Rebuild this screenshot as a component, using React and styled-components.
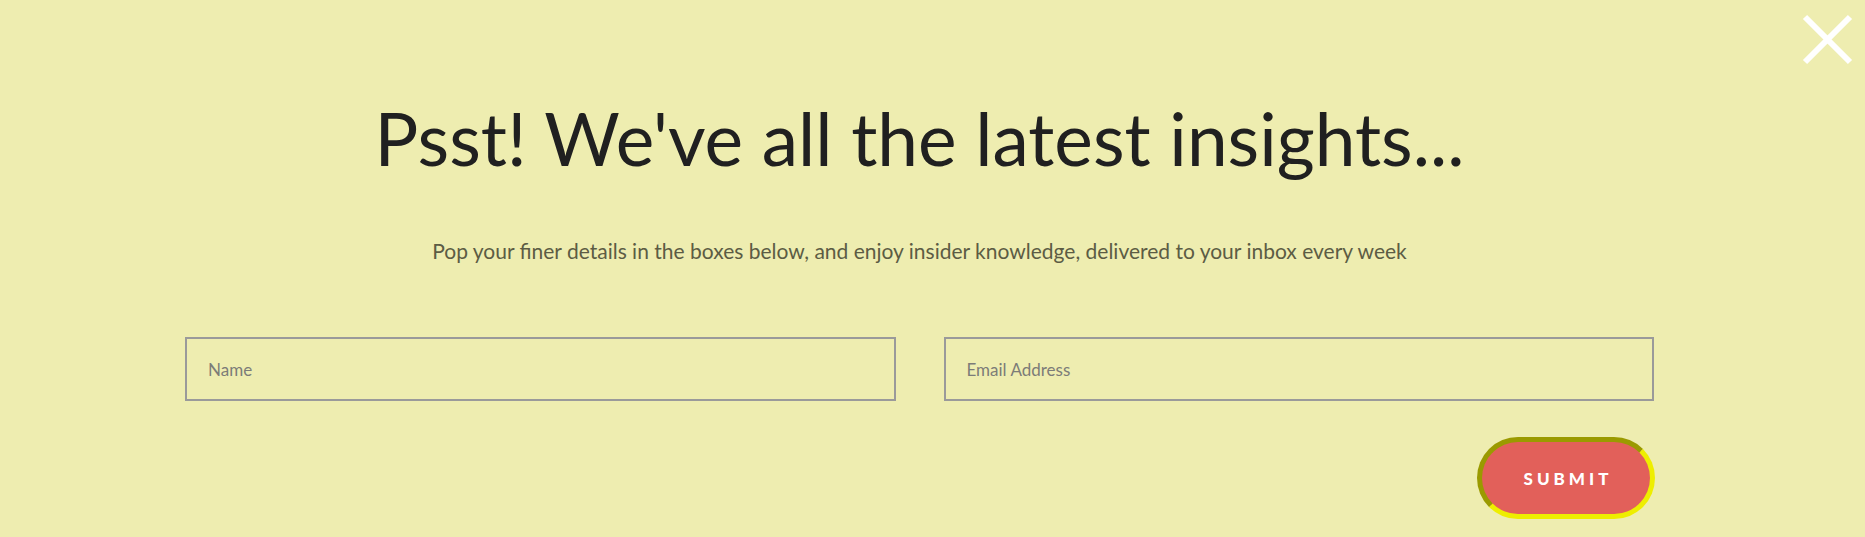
import React from 'react'
import styled, { createGlobalStyle } from 'styled-components'

const GlobalStyle = createGlobalStyle`
    html, body {
        margin: 0;
        padding: 0;
        background: #eeedb0;
    }
    body {
        font-family: Lato, "Noto Sans", sans-serif;
    }
`

const Page = styled.div`
    position: relative;
    width: 1865px;
    height: 537px;
    box-sizing: border-box;
    padding: 0 26px 0 0;
    background: #eeedb0;
    overflow: hidden;
`

const CloseBtn = styled.button`
    position: absolute;
    top: 14px;
    right: 12px;
    width: 51px;
    height: 51px;
    padding: 0;
    border: none;
    background: transparent;
    cursor: pointer;
`

const Content = styled.div`
    width: 1469px;
    margin: 0 auto;
    display: flex;
    flex-direction: column;
    align-items: center;
`

const Title = styled.h1`
    margin: 94px 0 0;
    font-size: 73px;
    font-weight: 400;
    line-height: 88px;
    color: #202020;
    letter-spacing: 0;
`

const Subtitle = styled.p`
    margin: 55px 0 0;
    font-size: 21px;
    line-height: 28px;
    color: #5c5c44;
`

const Form = styled.form`
    width: 100%;
    margin-top: 72px;
    display: flex;
    flex-direction: column;
`

const Fields = styled.div`
    display: grid;
    grid-template-columns: 1fr 1fr;
    gap: 48px;
`

const Input = styled.input`
    height: 64px;
    box-sizing: border-box;
    border: 2px solid #9a9a9a;
    background: transparent;
    padding: 0 21px;
    font-family: Lato, "Noto Sans", sans-serif;
    font-size: 17px;
    color: #333;
    outline: none;

    &::placeholder {
        color: #7c7c78;
    }
`

const Actions = styled.div`
    display: flex;
    justify-content: flex-end;
    margin-top: 36px;
    margin-right: -1px;
`

const Submit = styled.button`
    width: 178px;
    height: 82px;
    box-sizing: border-box;
    border: 5px solid;
    border-color: #9a9a00 #eeee00 #eeee00 #9a9a00;
    border-radius: 41px;
    background: #e2605a;
    color: #fff;
    font-family: Lato, "Noto Sans", sans-serif;
    font-size: 17px;
    font-weight: 900;
    letter-spacing: 4px;
    padding: 0 0 0 4px;
    cursor: pointer;
`

const App = function () {
    return (
        <Page>
            <GlobalStyle />
            <CloseBtn aria-label="Close">
                <svg width="51" height="51" viewBox="0 0 51 51">
                    <path d="M3 3 L48 48 M48 3 L3 48" stroke="#fff" strokeWidth="6" />
                </svg>
            </CloseBtn>
            <Content>
                <Title>Psst! We've all the latest insights...</Title>
                <Subtitle>
                    Pop your finer details in the boxes below, and enjoy insider knowledge, delivered to your inbox every week
                </Subtitle>
                <Form onSubmit={(e) => e.preventDefault()}>
                    <Fields>
                        <Input type="text" placeholder="Name" />
                        <Input type="email" placeholder="Email Address" />
                    </Fields>
                    <Actions>
                        <Submit type="submit">SUBMIT</Submit>
                    </Actions>
                </Form>
            </Content>
        </Page>
    )
}

export default App
